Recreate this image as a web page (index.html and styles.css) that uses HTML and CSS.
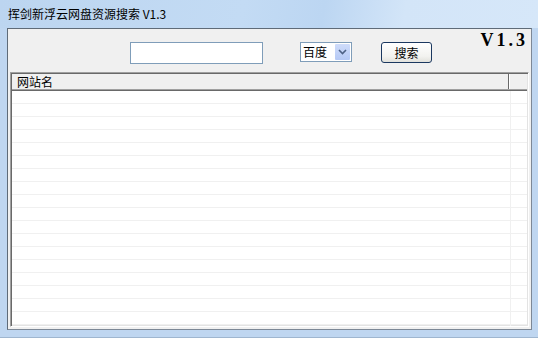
FILE: index.html
```html
<!DOCTYPE html>
<html>
<head>
<meta charset="utf-8">
<link rel="stylesheet" href="styles.css">
</head>
<body>
<div class="window">
  <div class="titlebar"><span class="title">挥剑新浮云网盘资源搜索 V1.3</span></div>
  <div class="client">
    <div class="toolbar">
      <div class="textbox"></div>
      <div class="combo">
        <span class="combo-text">百度</span>
        <span class="combo-btn"><svg width="9" height="6" viewBox="0 0 9 6"><path d="M1 1 L4.5 4.5 L8 1" fill="none" stroke="#4d6185" stroke-width="1.6"/></svg></span>
      </div>
      <div class="button">搜索</div>
      <div class="version">V1.3</div>
    </div>
    <div class="list">
      <div class="header">
        <div class="hcell first">网站名</div>
        <div class="hcell rest"></div>
      </div>
      <div class="rows">
        <div class="row"><div class="c1"></div><div class="c2"></div></div>
        <div class="row"><div class="c1"></div><div class="c2"></div></div>
        <div class="row"><div class="c1"></div><div class="c2"></div></div>
        <div class="row"><div class="c1"></div><div class="c2"></div></div>
        <div class="row"><div class="c1"></div><div class="c2"></div></div>
        <div class="row"><div class="c1"></div><div class="c2"></div></div>
        <div class="row"><div class="c1"></div><div class="c2"></div></div>
        <div class="row"><div class="c1"></div><div class="c2"></div></div>
        <div class="row"><div class="c1"></div><div class="c2"></div></div>
        <div class="row"><div class="c1"></div><div class="c2"></div></div>
        <div class="row"><div class="c1"></div><div class="c2"></div></div>
        <div class="row"><div class="c1"></div><div class="c2"></div></div>
        <div class="row"><div class="c1"></div><div class="c2"></div></div>
        <div class="row"><div class="c1"></div><div class="c2"></div></div>
        <div class="row"><div class="c1"></div><div class="c2"></div></div>
        <div class="row"><div class="c1"></div><div class="c2"></div></div>
        <div class="row"><div class="c1"></div><div class="c2"></div></div>
        <div class="row"><div class="c1"></div><div class="c2"></div></div>
        <div class="row"><div class="c1"></div><div class="c2"></div></div>
      </div>
    </div>
  </div>
</div>
</body>
</html>
```

FILE: styles.css
```css
html, body {
  margin: 0;
  padding: 0;
}
body {
  width: 538px;
  height: 338px;
  overflow: hidden;
  font-family: "Noto Sans CJK SC", "Liberation Sans", sans-serif;
  font-size: 12px;
  color: #000;
}
.window {
  width: 538px;
  height: 338px;
  box-sizing: border-box;
  background: #bfd6f0;
  display: flex;
  flex-direction: column;
  border-bottom: 1px solid #9fb6cf;
}
.titlebar {
  height: 28px;
  flex: none;
  display: flex;
  align-items: center;
  padding-left: 8px;
  background: linear-gradient(100deg, #bcd5f0 0%, #c3dbf4 45%, #bcd6f2 60%, #d3e5f8 75%, #d6e7f9 100%);
}
.title {
  font-size: 12px;
  line-height: 14px;
  margin-top: -1px;
}
.client {
  flex: 1;
  margin: 0 6px 7px 7px;
  background: #f0f0f0;
  border-left: 1px solid #5f6b78;
  border-top: 1px solid #5f6b78;
  border-right: 1px solid #7d8896;
  border-bottom: 1px solid #7d8896;
  display: flex;
  flex-direction: column;
  overflow: hidden;
}
.toolbar {
  height: 43px;
  flex: none;
  display: flex;
  align-items: flex-start;
  padding-top: 13px;
  padding-right: 3px;
  box-sizing: border-box;
}
.textbox {
  width: 131px;
  height: 20px;
  margin-left: 122px;
  background: #fff;
  border: 1px solid #7f9db9;
}
.combo {
  width: 50px;
  height: 18px;
  margin-left: 37px;
  background: #fff;
  border: 1px solid #7f9db9;
  display: flex;
  align-items: center;
  justify-content: space-between;
}
.combo-text {
  padding-left: 2px;
  line-height: 16px;
}
.combo-btn {
  width: 15px;
  height: 16px;
  margin-right: 1px;
  background: linear-gradient(#cfdcfa, #b5c9f5);
  border-radius: 1px;
  display: flex;
  align-items: center;
  justify-content: center;
}
.button {
  width: 49px;
  height: 19px;
  margin-left: 29px;
  border: 1px solid #1b3860;
  border-radius: 3px;
  background: linear-gradient(#ffffff, #f2f2ef 70%, #e1e1dc);
  display: flex;
  align-items: center;
  justify-content: center;
  line-height: 14px;
}
.version {
  margin-left: auto;
  margin-top: -12px;
  font-family: "Liberation Serif", "DejaVu Serif", serif;
  font-weight: bold;
  font-size: 18px;
  line-height: 20px;
  letter-spacing: 3px;
}
.list {
  flex: 1;
  margin: 0 2px 2px 2px;
  border-top: 1px solid #a0a0a0;
  border-left: 1px solid #a0a0a0;
  border-right: 1px solid #ffffff;
  border-bottom: 1px solid #ffffff;
  box-shadow: inset 1px 1px 0 #696969, inset -1px -1px 0 #e3e3e3;
  background: #fff;
  padding: 1px;
  display: flex;
  flex-direction: column;
  overflow: hidden;
}
.header {
  display: flex;
  height: 15px;
  flex: none;
  background: #f0f0f0;
  border-bottom: 1px solid #a0a0a0;
  box-shadow: 0 1px 0 #696969;
  margin-bottom: 1px;
}
.hcell {
  line-height: 15px;
  box-sizing: border-box;
}
.hcell.first {
  width: 497px;
  padding-left: 5px;
  border-right: 1px solid #696969;
  box-shadow: 1px 0 0 #fff;
}
.hcell.rest {
  flex: 1;
}
.rows {
  flex: 1;
}
.row {
  display: flex;
  height: 13px;
  box-sizing: border-box;
  border-bottom: 1px solid #f0f0f0;
}
.c1 {
  width: 498px;
  border-right: 1px solid #f0f0f0;
}
.c2 {
  flex: 1;
}
```
